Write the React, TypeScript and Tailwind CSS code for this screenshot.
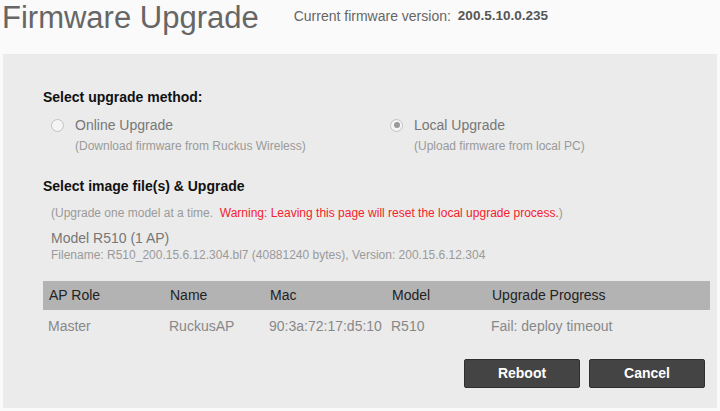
import React from 'react';

const font = { fontFamily: '"Liberation Sans", Arial, sans-serif' };

function Radio({ checked }: { checked?: boolean }) {
  return (
    <span className="flex h-[13px] w-[13px] items-center justify-center rounded-full border-[1.5px] border-[#c2c2c2] bg-[#f4f4f4]">
      {checked && <span className="h-[6px] w-[6px] rounded-full bg-[#9a9a9a]" />}
    </span>
  );
}

function Method({ label, desc, checked }: { label: string; desc: string; checked?: boolean }) {
  return (
    <div>
      <div className="flex h-[18px] items-center pl-[8px]">
        <Radio checked={checked} />
        <span className="ml-[11px] text-[14px] leading-[18px] text-[#777]">{label}</span>
      </div>
      <div className="mt-[4px] pl-[32px] text-[12px] leading-[16px] text-[#9a9a9a]">{desc}</div>
    </div>
  );
}

const cols = 'grid grid-cols-[121px_100px_122px_100px_1fr]';

export default function App() {
  return (
    <div style={font} className="h-[411px] w-[720px] overflow-hidden bg-[#fafafa]">
      <div className="flex h-[54px] items-start">
        <h1 className="ml-[2px] text-[31px] leading-[36px] text-[#666]">Firmware Upgrade</h1>
        <div className="ml-[35px] mt-[7px] flex items-center text-[14px] leading-[18px] text-[#666]">
          <span>Current firmware version:</span>
          <span className="ml-[7px] text-[13.5px] font-bold text-[#555]">200.5.10.0.235</span>
        </div>
      </div>

      <div className="ml-[3px] h-[354px] w-[714px] bg-[#ebebeb] pl-[40px] pt-[34px]">
        <div className="text-[14px] font-bold leading-[18px] text-[#111]">Select upgrade method:</div>
        <div className="mt-[10px] grid grid-cols-[339px_1fr]">
          <Method label="Online Upgrade" desc="(Download firmware from Ruckus Wireless)" />
          <Method label="Local Upgrade" desc="(Upload firmware from local PC)" checked />
        </div>

        <div className="mt-[23px] text-[14px] font-bold leading-[18px] text-[#111]">Select image file(s) &amp; Upgrade</div>
        <div className="mt-[10px] pl-[8px] text-[12px] leading-[16px] text-[#9a9a9a]">
          (Upgrade one model at a time.&nbsp;&nbsp;
          <span className="text-[#f5222d]">Warning: Leaving this page will reset the local upgrade process.</span>)
        </div>
        <div className="mt-[8px] pl-[8px] text-[14px] leading-[18px] text-[#777]">Model R510 (1 AP)</div>
        <div className="pl-[8px] text-[12px] leading-[16px] text-[#9a9a9a]">
          Filename: R510_200.15.6.12.304.bl7 (40881240 bytes), Version: 200.15.6.12.304
        </div>

        <div className="mt-[18px] w-[667px]">
          <div className={`${cols} h-[29px] items-center bg-[#b3b3b3] pl-[6px] text-[14px] text-[#222]`}>
            <span>AP Role</span>
            <span>Name</span>
            <span>Mac</span>
            <span>Model</span>
            <span>Upgrade Progress</span>
          </div>
          <div className={`${cols} h-[32px] items-center pl-[5px] text-[14px] text-[#888]`}>
            <span>Master</span>
            <span>RuckusAP</span>
            <span>90:3a:72:17:d5:10</span>
            <span>R510</span>
            <span>Fail: deploy timeout</span>
          </div>
        </div>

        <div className="mt-[17px] flex w-[662px] justify-end gap-[9px]">
          <button className="h-[29px] w-[116px] rounded-[2px] border border-[#2f2f2f] bg-[#444] text-[14px] font-bold leading-[27px] text-white">
            Reboot
          </button>
          <button className="h-[29px] w-[116px] rounded-[2px] border border-[#2f2f2f] bg-[#444] text-[14px] font-bold leading-[27px] text-white">
            Cancel
          </button>
        </div>
      </div>
    </div>
  );
}
